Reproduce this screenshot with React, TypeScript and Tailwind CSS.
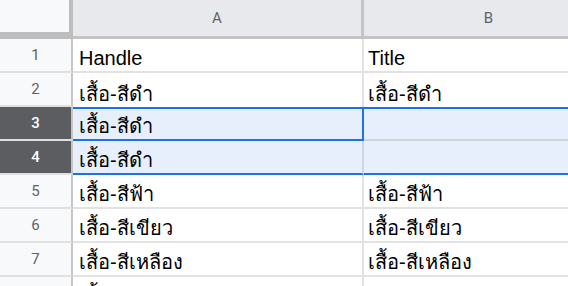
import React from 'react';

type Row = {
  n: number;
  a: string;
  b: string;
  selected?: boolean;
};

const rows: Row[] = [
  { n: 1, a: 'Handle', b: 'Title' },
  { n: 2, a: 'เสื้อ-สีดำ', b: 'เสื้อ-สีดำ' },
  { n: 3, a: 'เสื้อ-สีดำ', b: '', selected: true },
  { n: 4, a: 'เสื้อ-สีดำ', b: '', selected: true },
  { n: 5, a: 'เสื้อ-สีฟ้า', b: 'เสื้อ-สีฟ้า' },
  { n: 6, a: 'เสื้อ-สีเขียว', b: 'เสื้อ-สีเขียว' },
  { n: 7, a: 'เสื้อ-สีเหลือง', b: 'เสื้อ-สีเหลือง' },
  { n: 8, a: 'เสื้อ-สีฟ้า', b: '' },
];

const cellFont = { fontFamily: '"Liberation Sans", Arial, sans-serif' };
const headFont = { fontFamily: 'Roboto, "Liberation Sans", Arial, sans-serif' };

export default function App() {
  return (
    <div className="w-[568px] h-[286px] overflow-hidden bg-white">
      <div className="w-[680px]">
        {/* Column headers */}
        <div className="flex h-[39px]">
          <div className="w-[73px] h-full bg-[#bdbdbd] shrink-0">
            <div className="w-[69px] h-[32px] bg-[#f8f9fa]" />
          </div>
          <div
            className="w-[291px] h-full shrink-0 bg-[#e8e9ec] border-b-[3px] border-r-[3px] border-[#c4c4c4] flex items-center justify-center text-[15px] text-[#5f6368]"
            style={headFont}
          >
            A
          </div>
          <div
            className="w-[252px] h-full shrink-0 bg-[#e8e9ec] border-b-[3px] border-r-[3px] border-[#c4c4c4] flex items-center justify-center text-[15px] text-[#5f6368]"
            style={headFont}
          >
            B
          </div>
          <div className="flex-1 h-full bg-[#e8e9ec] border-b-[3px] border-[#c4c4c4]" />
        </div>

        {rows.map((r, i) => {
          const nextSelected = rows[i + 1]?.selected;
          const isFirstSel = r.selected && !rows[i - 1]?.selected;
          const isLastSel = r.selected && !nextSelected;
          let aBorder = 'border-b-2 border-[#e2e2e2]';
          let bBorder = 'border-b-2 border-[#e2e2e2]';
          if (nextSelected && !r.selected) {
            aBorder = '';
            bBorder = '';
          }
          if (r.selected) {
            const top = isFirstSel ? 'border-t-2 border-t-[#1a73e8]' : '';
            aBorder = `${top} border-b-2 border-b-[#1a73e8] ${isFirstSel ? 'border-r-2 border-r-[#1a73e8]' : 'border-r-2 border-r-[#d3d6dc]'}`;
            bBorder = `${top} border-b-2 ${isLastSel ? 'border-b-[#1a73e8]' : 'border-b-[#cfd3da]'}`;
          }
          return (
            <div key={r.n} className="flex h-[34px]">
              <div
                className={`w-[73px] shrink-0 h-full border-r-2 border-r-[#c6c6c6] border-b-2 border-b-[#e0e0e0] flex items-center justify-center text-[15px] ${
                  r.selected ? 'bg-[#5b5d60] text-white font-medium border-b-[#8a8c8f]' : 'bg-[#f8f9fa] text-[#5f6368]'
                }`}
                style={headFont}
              >
                {r.n}
              </div>
              <div
                className={`w-[291px] shrink-0 h-full flex items-end pb-[2px] pl-[6px] text-[20px] text-black leading-[22px] ${
                  r.selected ? 'bg-[#e8effc]' : 'bg-white border-r-2 border-r-[#e2e2e2]'
                } ${aBorder}`}
                style={cellFont}
              >
                {r.a}
              </div>
              <div
                className={`flex-1 h-full flex items-end pb-[2px] pl-[4px] text-[20px] text-black leading-[22px] ${
                  r.selected ? 'bg-[#e8effc]' : 'bg-white'
                } ${bBorder}`}
                style={cellFont}
              >
                {r.b}
              </div>
            </div>
          );
        })}
      </div>
    </div>
  );
}
